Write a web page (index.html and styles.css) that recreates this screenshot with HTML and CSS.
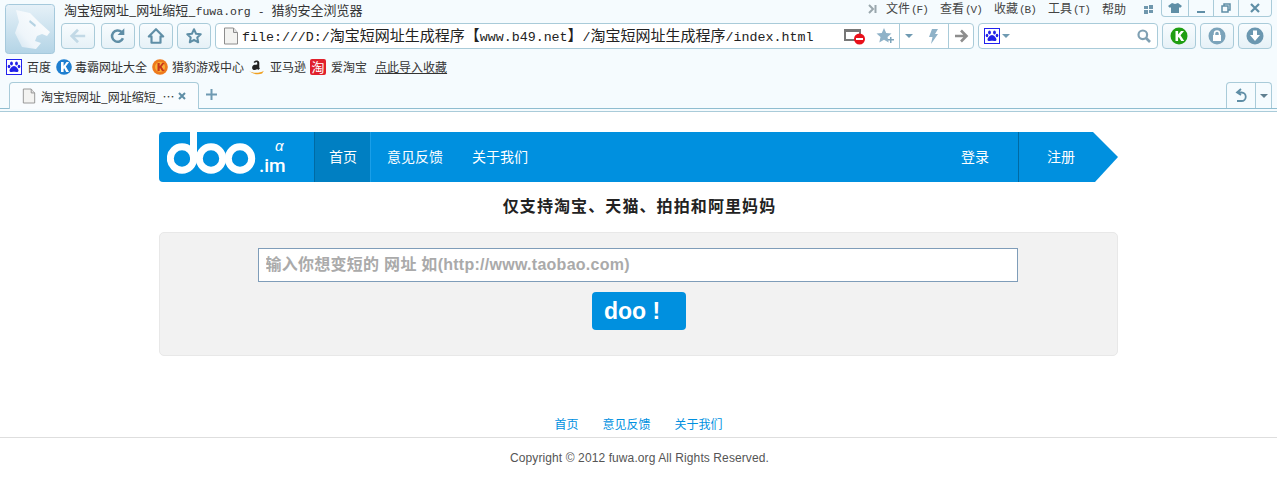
FILE: index.html
```html
<!DOCTYPE html>
<html lang="zh-CN">
<head>
<meta charset="utf-8">
<title>淘宝短网址_网址缩短_fuwa.org</title>
<link rel="stylesheet" href="styles.css">
</head>
<body>
<svg class="defs" width="0" height="0" aria-hidden="true">
  <defs>
    <symbol id="paper" viewBox="0 0 16 18">
      <path d="M1.5 1h9l4 4.500v11.500h-13z" fill="#f3f3f1" stroke="#8d8d8d"/>
      <path d="M10.500 1v4.500h4" fill="#e2e2e2" stroke="#8d8d8d"/>
    </symbol>
    <symbol id="paw" viewBox="0 0 16 16">
      <rect x=".5" y=".5" width="15" height="15" fill="#fff" stroke="#2222ee"/>
      <g fill="#2020e8">
        <ellipse cx="5.500" cy="4.500" rx="1.400" ry="1.900"/>
        <ellipse cx="10.500" cy="4.500" rx="1.400" ry="1.900"/>
        <ellipse cx="3" cy="7.500" rx="1.300" ry="1.700"/>
        <ellipse cx="13" cy="7.500" rx="1.300" ry="1.700"/>
        <path d="M8 7c2 0 4.500 3 4.500 4.500 0 1.500-1.500 1.800-2.500 1.500-1.300-.4-2.700-.4-4 0-1 .3-2.500 0-2.500-1.500C3.500 10 6 7 8 7z"/>
      </g>
    </symbol>
  </defs>
</svg>

<header class="chrome">
  <div class="chrome-head">
    <svg class="wolf" viewBox="0 0 50 50" aria-hidden="true">
      <defs>
        <linearGradient id="wolfbg" x1="0" y1="0" x2="0" y2="1"><stop offset="0" stop-color="#e6f1f8"/><stop offset="1" stop-color="#b3d4e6"/></linearGradient>
        <linearGradient id="wolffg" x1="1" y1="0" x2="0" y2="1"><stop offset="0" stop-color="#ffffff"/><stop offset=".7" stop-color="#eef5fa"/><stop offset="1" stop-color="#cfe3ef"/></linearGradient>
      </defs>
      <rect x=".5" y=".5" width="49" height="49" rx="3" fill="url(#wolfbg)" stroke="#a5c9dc"/>
      <path d="M11 6L25 9 35 19 45 28 42 32 37 30 32 32 30 37 36 39 31 45 17 43 10 29 14 18z" fill="url(#wolffg)"/>
      <path d="M25 16l6 5-1 2-6-5z" fill="#b5d3e3"/>
    </svg>
    <div class="head-main">
      <div class="title-row">
        <span class="title">淘宝短网址_网址缩短_<span class="lat">fuwa.org - </span>猎豹安全浏览器</span>
        <div class="menu">
          <svg class="chev" viewBox="0 0 9 10" aria-hidden="true"><path d="M1 1l4 4-4 4M7.500 1v8" fill="none" stroke="#9aa7ad" stroke-width="2"/></svg>
          <span>文件<span class="hot">(F)</span></span>
          <span>查看<span class="hot">(V)</span></span>
          <span>收藏<span class="hot">(B)</span></span>
          <span>工具<span class="hot">(T)</span></span>
          <span>帮助</span>
          <svg class="grid-ico" viewBox="0 0 9 9" aria-hidden="true"><path d="M0 1h4v3H0zM5 0h4v4H5zM0 5h4v4H0zM5 5h4v3H5z" fill="#6f97ad"/></svg>
        </div>
        <div class="winbtns">
          <span class="winbtn w1"><svg viewBox="0 0 14 12" aria-hidden="true"><path d="M4 1l3 1 3-1 4 3-2 2-1-1v6H3V5L2 6 0 4z" fill="#5f8ea6"/></svg></span>
          <span class="winbtn w2"><svg viewBox="0 0 12 12" aria-hidden="true"><path d="M2 9h8v2H2z" fill="#5f8ea6"/></svg></span>
          <span class="winbtn w3"><svg viewBox="0 0 12 12" aria-hidden="true"><path d="M2 4h6v6H2zM4 4V2h6v6H8" fill="none" stroke="#5f8ea6" stroke-width="1.500"/></svg></span>
          <span class="winbtn w4"><svg viewBox="0 0 12 12" aria-hidden="true"><path d="M2 2l8 8M10 2l-8 8" stroke="#5f8ea6" stroke-width="2.200"/></svg></span>
        </div>
      </div>
      <div class="toolbar">
        <button class="tbtn t-back" type="button"><svg viewBox="0 0 20 20" aria-hidden="true"><path d="M18 10H4M10 3l-7 7 7 7" fill="none" stroke="#c2d9e6" stroke-width="3"/></svg></button>
        <button class="tbtn t-ref" type="button"><svg viewBox="0 0 20 20" aria-hidden="true"><path d="M15.500 12.500A6.300 6.300 0 1 1 14 5.500" fill="none" stroke="#5f8ea6" stroke-width="2.800"/><path d="M17 1.500v7.500h-7.500z" fill="#5f8ea6"/></svg></button>
        <button class="tbtn" type="button"><svg viewBox="0 0 20 20" aria-hidden="true"><path d="M10 2.500L2 10.500h3v7h10v-7h3z" fill="none" stroke="#5f8ea6" stroke-width="2.400" stroke-linejoin="round"/></svg></button>
        <button class="tbtn" type="button"><svg viewBox="0 0 20 20" aria-hidden="true"><path d="M10 2.500l2.300 5 5.200.6-3.900 3.600 1.100 5.300-4.700-2.700L5.300 17l1.100-5.300L2.500 8.100l5.200-.6z" fill="none" stroke="#5f8ea6" stroke-width="2.200" stroke-linejoin="round"/></svg></button>
        <div class="address">
          <svg class="addr-page" aria-hidden="true"><use href="#paper"/></svg>
          <span class="url">file:///D:/<span class="zh">淘宝短网址生成程序【</span>www.b49.net<span class="zh">】</span>/<span class="zh">淘宝短网址生成程序</span>/index.html</span>
          <svg class="addr-stop" viewBox="0 0 22 17" aria-hidden="true"><path d="M1 2h15v10H1z" fill="#fff" stroke="#777" stroke-width="2"/><path d="M1 1h15v3H1z" fill="#777"/><circle cx="15.500" cy="11" r="5.500" fill="#e8101a"/><path d="M12 10h7v2h-7z" fill="#fff"/></svg>
          <svg class="addr-star" viewBox="0 0 18 16" aria-hidden="true"><path d="M8 0l2.200 5 5.300.5-4 3.600 1.200 5.400L8 11.700 3.300 14.500l1.200-5.400-4-3.600L5.800 5z" fill="#8fb2c8"/><path d="M12 11h2V9h1.500v2H18v1.500h-2.500V15H14v-2.500h-2z" fill="#7ea4ba"/></svg>
          <span class="addr-cell c-drop"><i class="caret"></i></span>
          <span class="addr-cell c-bolt"><svg viewBox="0 0 10 15" aria-hidden="true"><path d="M4 0h6L7 5h3L3 15l1.500-7H1z" fill="#8fb2c8"/></svg></span>
          <span class="addr-cell c-go"><svg viewBox="0 0 15 14" aria-hidden="true"><path d="M1 7h11M7 1.500L12.500 7 7 12.500" fill="none" stroke="#8d8d8d" stroke-width="2.600"/></svg></span>
        </div>
        <div class="search">
          <svg class="s-paw" aria-hidden="true"><use href="#paw"/></svg>
          <i class="caret"></i>
          <svg class="s-glass" viewBox="0 0 14 14" aria-hidden="true"><circle cx="5.800" cy="5.800" r="4.300" fill="none" stroke="#7fa0b3" stroke-width="2.200"/><path d="M9 9l4 4" stroke="#7fa0b3" stroke-width="2.600"/></svg>
        </div>
        <button class="tbtn sq" type="button"><svg viewBox="0 0 18 18" aria-hidden="true"><circle cx="9" cy="9" r="8.500" fill="#1f9e12"/><path d="M5.500 4h2.600v3.600L11 4h3l-3.500 4.200L14.200 14h-3L8.800 10l-.7.800V14H5.500z" fill="#fff"/></svg></button>
        <button class="tbtn sq" type="button"><svg viewBox="0 0 18 18" aria-hidden="true"><circle cx="9" cy="9" r="8.500" fill="#7ba3ba"/><path d="M5 8h8v6H5z" fill="#fff"/><path d="M6.500 8V6.500a2.500 2.500 0 0 1 5 0V8" fill="none" stroke="#fff" stroke-width="1.500"/></svg></button>
        <button class="tbtn sq" type="button"><svg viewBox="0 0 18 18" aria-hidden="true"><circle cx="9" cy="9" r="8.500" fill="#6b97b0"/><path d="M7 3.500h4V8h3l-5 6-5-6h3z" fill="#fff"/></svg></button>
      </div>
    </div>
  </div>

  <nav class="bookmarks">
    <a class="bm b1"><svg aria-hidden="true"><use href="#paw"/></svg>百度</a>
    <a class="bm b2"><svg viewBox="0 0 16 16" aria-hidden="true"><circle cx="8" cy="8" r="7.800" fill="#1f7fd0"/><path d="M5 3h2.600v4L10.500 3h2.600L9.800 7.600 13 13h-2.800L8.200 9.300l-.6.700v3H5z" fill="#fff"/></svg>毒霸网址大全</a>
    <a class="bm b3"><svg viewBox="0 0 16 16" aria-hidden="true"><circle cx="8" cy="8" r="7.800" fill="#ee7a1c"/><circle cx="8" cy="8" r="5" fill="#f8b23a"/><path d="M5.500 4h2.200v3.200L10.200 4h2.300L9.600 7.700 12.500 12H10L8.100 9.100l-.4.500V12H5.500z" fill="#c8361a"/></svg>猎豹游戏中心</a>
    <a class="bm b4"><svg viewBox="1 2 14 13.500" aria-hidden="true"><path d="M5 4.500c.3-1.500 4.500-2.200 5 .3V9c0 .6.300.8.600 1L9 11.300l-.8-.8c-1.500 1.500-4.500 1.300-4.500-1.200 0-2.200 2.500-2.800 4.500-2.800V5c-.3-.8-1.500-.8-1.900.2z" fill="#222"/><path d="M1 12c3.500 2.500 9 2.500 13 0l-1.500 2.500c-3 1-8 1-11.500-2.500z" fill="#f0a020"/></svg>亚马逊</a>
    <a class="bm b5"><span class="tao">淘</span>爱淘宝</a>
    <a class="bm-import">点此导入收藏</a>
  </nav>

  <div class="tabbar">
    <div class="tab">
      <svg class="tab-page" aria-hidden="true"><use href="#paper"/></svg>
      <span class="tab-title">淘宝短网址_网址缩短_…</span>
      <svg class="tab-x" viewBox="0 0 8 8" aria-hidden="true"><path d="M1 1l6 6M7 1L1 7" stroke="#5f8ea6" stroke-width="2"/></svg>
    </div>
    <svg class="tab-plus" viewBox="0 0 11 11" aria-hidden="true"><path d="M5.500 0v11M0 5.500h11" stroke="#6f9ab2" stroke-width="2"/></svg>
    <div class="undo">
      <span class="undo-main"><svg viewBox="0 0 14 15" aria-hidden="true"><path d="M7 1L3 4.500 7 7M3.500 4.500h4a3.800 3.800 0 0 1 0 8.500H3" fill="none" stroke="#5f8ea6" stroke-width="1.800"/></svg></span>
      <span class="undo-drop"><i class="caret dark"></i></span>
    </div>
  </div>
</header>

<main class="site">
  <div class="navbar">
    <a class="brand">
      <svg class="brand-mark" viewBox="0 0 90 42" aria-label="doo" role="img">
        <g fill="none" stroke="#fff" stroke-width="7">
          <circle cx="15" cy="26.500" r="11.700"/>
          <circle cx="44" cy="26.500" r="11.700"/>
          <circle cx="73" cy="26.500" r="11.700"/>
        </g>
        <path d="M23 0h7v27h-7z" fill="#fff"/>
      </svg>
      <span class="brand-im">.im</span>
      <span class="brand-alpha">α</span>
    </a>
    <a class="nav-item active">首页</a>
    <a class="nav-item">意见反馈</a>
    <a class="nav-item">关于我们</a>
    <span class="nav-space"></span>
    <a class="nav-login">登录</a>
    <a class="nav-reg">注册</a>
  </div>

  <h1 class="support">仅支持淘宝、天猫、拍拍和阿里妈妈</h1>

  <form class="panel">
    <input class="url-input" type="text" placeholder="输入你想变短的 网址 如(http://www.taobao.com)">
    <button class="doo-btn" type="button">doo !</button>
  </form>
</main>

<footer class="foot">
  <div class="foot-links"><a>首页</a><a>意见反馈</a><a>关于我们</a></div>
  <p class="copy">Copyright © 2012 fuwa.org All Rights Reserved.</p>
</footer>
</body>
</html>
```
FILE: styles.css
```css
* { box-sizing: border-box; }
html, body { margin: 0; padding: 0; background: #fff; }
body { font-family: "Noto Sans CJK SC", sans-serif; overflow: hidden; }
.defs { position: absolute; }
svg { display: block; flex: none; }

.chrome {
  height: 112px;
  background: #f5fbfe;
  border-bottom: 1px solid #a9cbd9;
  position: relative;
}
.chrome-head { display: flex; padding-left: 5px; height: 54px; }
.wolf { width: 50px; height: 50px; margin-top: 4px; }
.head-main { flex: 1; margin-left: 6px; min-width: 0; }

.title-row { display: flex; height: 23px; align-items: flex-start; }
.title { font-size: 13px; line-height: 20px; color: #333; padding-left: 3px; white-space: nowrap; }
.lat { font-family: "Liberation Mono", monospace; font-size: 11.5px; }
.menu { margin-left: auto; display: flex; align-items: center; height: 18px; font-size: 12px; color: #444; white-space: nowrap; }
.menu > span { width: 54px; line-height: 18px; }
.menu > span:nth-last-of-type(1) { width: 42px; }
.hot { font-family: "Liberation Mono", monospace; font-size: 11px; letter-spacing: -1px; margin-left: 1px; }
.chev { width: 9px; height: 10px; margin-right: 9px; }
.grid-ico { width: 9px; height: 9px; margin-right: 8px; }
.winbtns { display: flex; height: 17px; margin-right: 5px; border: 1px solid #a9cbd9; border-top: 0; border-radius: 0 0 4px 4px; }
.winbtn { display: flex; align-items: center; justify-content: center; border-right: 1px solid #a9cbd9; }
.winbtn svg { width: 12px; height: 12px; }
.w1 { width: 27px; } .w2 { width: 25px; } .w3 { width: 25px; } .w4 { width: 32px; border-right: 0; }
.w1 svg { width: 14px; }

.toolbar { display: flex; height: 26px; margin-right: 5px; }
.tbtn {
  width: 34px; height: 26px; padding: 0; margin-right: 4px;
  display: flex; align-items: center; justify-content: center;
  border: 1px solid #a9cbd9; border-radius: 4px;
  background: linear-gradient(#f8fcfe, #e6f1f7);
}
.t-back { margin-right: 6px; }
.tbtn svg { width: 18px; height: 18px; }
.tbtn.sq:last-child { margin-right: 0; }

.address {
  width: 759px; height: 26px; margin-right: 4px;
  display: flex; align-items: center;
  background: #fff; border: 1px solid #a9cbd9; border-radius: 4px;
  white-space: nowrap;
}
.addr-page { width: 16px; height: 18px; margin-left: 7px; }
.url { font-family: "Liberation Mono", monospace; font-size: 13.3px; color: #222; margin-left: 3px; width: 602px; line-height: 24px; }
.zh { font-family: "Noto Sans CJK SC", sans-serif; font-size: 15px; }
.addr-stop { width: 22px; height: 17px; margin-right: 10px; }
.addr-star { width: 18px; height: 16px; margin-right: 5px; }
.addr-cell { height: 24px; display: flex; align-items: center; justify-content: center; border-left: 1px solid #a9cbd9; }
.c-drop { width: 18px; }
.c-bolt { width: 31px; border-left: 0; }
.c-bolt svg { width: 10px; height: 15px; }
.c-go { flex: 1; }
.c-go svg { width: 15px; height: 14px; }
.caret { display: block; width: 0; height: 0; border: 4px solid transparent; border-top: 4px solid #6f9ab2; border-bottom: 0; }
.caret.dark { border-top-color: #5f7f90; }

.search {
  width: 180px; height: 26px; margin-right: 4px;
  display: flex; align-items: center;
  background: #fff; border: 1px solid #a9cbd9; border-radius: 4px;
}
.s-paw { width: 16px; height: 16px; margin-left: 5px; margin-right: 2px; }
.s-glass { width: 14px; height: 14px; margin-left: auto; margin-right: 6px; }

.bookmarks { display: flex; align-items: center; height: 24px; padding-top: 1px; font-size: 12px; color: #333; white-space: nowrap; }
.bm { display: flex; align-items: center; }
.bm svg { width: 16px; height: 16px; margin-right: 5px; }
.b1 { margin-left: 6px; }
.b2 { margin-left: 5px; }
.b2 svg { margin-right: 3px; }
.b3 { margin-left: 5px; }
.b3 svg { margin-right: 4px; }
.b4 { margin-left: 5px; }
.b5 { margin-left: 4px; }
.tao { width: 16px; height: 16px; margin-right: 5px; background: #e0202c; color: #fff; font-size: 13px; line-height: 16px; text-align: center; border-radius: 2px; }
.bm-import { margin-left: 8px; text-decoration: underline; }

.tabbar { display: flex; align-items: flex-end; height: 31px; padding-left: 9px; border-bottom: 1px solid #8fbdd0; position: relative; }
.tab {
  width: 190px; height: 27px; margin-bottom: -1px;
  display: flex; align-items: center;
  background: #f9fcfe; border: 1px solid #a9cbd9; border-bottom: 0; border-radius: 4px 4px 0 0;
}
.tab-page { width: 14px; height: 16px; margin-left: 12px; }
.tab-title { font-size: 12px; color: #333; margin-left: 5px; width: 137px; white-space: nowrap; overflow: hidden; }
.tab-x { width: 8px; height: 8px; }
.tab-plus { width: 11px; height: 11px; margin: 0 0 8px 7px; }
.undo { margin-left: auto; margin-right: 5px; width: 46px; height: 26px; display: flex; border: 1px solid #a9cbd9; border-bottom: 0; border-radius: 4px 4px 0 0; }
.undo-main { width: 29px; display: flex; align-items: center; justify-content: center; border-right: 1px solid #a9cbd9; }
.undo-main svg { width: 14px; height: 15px; }
.undo-drop { flex: 1; display: flex; align-items: center; justify-content: center; }

.site { width: 959px; margin: 0 auto; padding-top: 20px; }
.navbar {
  height: 50px; display: flex; align-items: stretch;
  background: #0090df; color: #fff; font-size: 14px; line-height: 48px;
  border-radius: 4px 0 0 4px;
  clip-path: polygon(0 0, 934px 0, 100% 50%, 936px 100%, 0 100%);
}
.brand { width: 155px; display: block; position: relative; }
.brand-mark { width: 90px; height: 42px; position: absolute; left: 8px; top: 0; }
.brand-im { position: absolute; left: 100px; top: 21px; font: 500 19px/26px Roboto, sans-serif; }
.brand-alpha { position: absolute; left: 116px; top: 6px; font: italic 15px/16px "Liberation Sans", sans-serif; }
.nav-item { padding: 0 14.500px; white-space: nowrap; }
.nav-item.active { width: 57px; padding: 0 14px; background: #007fc2; border-left: 1px solid #006aa3; border-right: 1px solid #1a9fe8; }
.active + .nav-item { margin-left: 1.500px; }
.nav-space { flex: 1; }
.nav-login { width: 57px; }
.nav-reg { width: 100px; padding-left: 28px; border-left: 1px solid #006aa3; }

.support { margin: 14px 0 18px; padding-left: 2px; height: 18px; font-size: 16px; line-height: 18px; font-weight: 700; color: #222; text-align: center; letter-spacing: 1.100px; }
.panel {
  height: 124px; padding-top: 15px;
  display: flex; flex-direction: column; align-items: center;
  background: #f2f2f2; border: 1px solid #e8e8e8; border-radius: 5px;
}
.url-input {
  width: 760px; height: 34px; padding: 0 7px; margin: 0 2px 0 0;
  background: #fff; border: 1px solid #7f9db9; border-radius: 0;
  font: 700 16px "Liberation Sans", "Noto Sans CJK SC", sans-serif; letter-spacing: .27px; outline: 0;
}
.url-input::placeholder { color: #aaa; opacity: 1; }
.doo-btn {
  width: 94px; height: 38px; margin: 10px 0 0 1px; padding: 0 0 0 12px;
  background: #0090df; color: #fff; border: 0; border-radius: 4px;
  font: 700 23px/38px "Liberation Sans", sans-serif; text-align: left;
}

.foot { margin-top: 60px; }
.foot-links { display: flex; justify-content: center; gap: 24px; height: 22px; font-size: 12px; line-height: 16px; color: #0090df; border-bottom: 1px solid #dedede; }
.copy { margin: 12px 0 0; padding-left: 2px; text-align: center; font: 12px/16px "Liberation Sans", sans-serif; letter-spacing: .1px; color: #555; }
```
